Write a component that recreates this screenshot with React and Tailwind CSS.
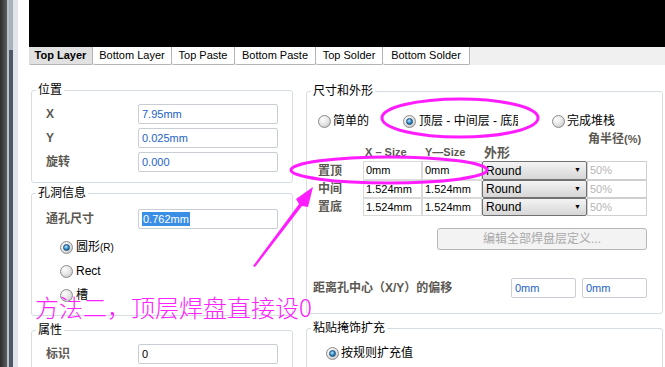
import React from 'react';

const tabs = [
  { label: 'Top Layer', w: 'w-[64px]', active: true },
  { label: 'Bottom Layer', w: 'w-[79px]' },
  { label: 'Top Paste', w: 'w-[63px]' },
  { label: 'Bottom Paste', w: 'w-[81px]' },
  { label: 'Top Solder', w: 'w-[67px]' },
  { label: 'Bottom Solder', w: 'w-[87px]' },
];

const layers = [
  { name: '置顶', x: '0mm', y: '0mm', h: 'h-[19px]' },
  { name: '中间', x: '1.524mm', y: '1.524mm', h: 'h-[18px]' },
  { name: '置底', x: '1.524mm', y: '1.524mm', h: 'h-[18px]' },
];

function Radio({ on }) {
  return (
    <span className="inline-flex w-[13px] h-[13px] shrink-0 items-center justify-center rounded-full border border-[#8b8b8b] bg-[radial-gradient(circle_at_35%_30%,#ffffff,#e2e2e2_55%,#b5b5b5)]">
      {on && (
        <span className="w-[7px] h-[7px] rounded-full border border-[#1a4c74] bg-[radial-gradient(circle_at_40%_35%,#b0e8ff,#3188c8_55%,#0f416e)]" />
      )}
    </span>
  );
}

function Field({ children, className = '' }) {
  return (
    <div className={`h-[20px] border border-[#c9ced4] rounded-[2px] bg-white flex items-center pl-[3px] text-[11px] ${className}`}>
      {children}
    </div>
  );
}

function Group({ title, className = '', children }) {
  return (
    <fieldset className={`border border-[#d6dde3] rounded-[3px] ${className}`}>
      <legend className="ml-[4px] px-[2px] text-[12px] leading-[13px] text-black">{title}</legend>
      {children}
    </fieldset>
  );
}

const label = 'text-[#5c5852] font-bold';

export default function App() {
  return (
    <div className="relative w-[665px] h-[367px] overflow-hidden bg-white flex text-black font-['Liberation_Sans','Noto_Sans_CJK_SC',sans-serif]">
      {/* left window edge */}
      <div className="flex w-[29px] shrink-0 h-full">
        <div className="w-[7px] bg-gradient-to-r from-[#2c2c2c] to-[#5e5e5e]" />
        <div className="w-[2px] bg-[#b9bfc6]" />
        <div className="w-[4px] flex flex-col">
          <div className="h-[50px] bg-[#a8b0ba]" />
          <div className="flex-1 bg-[#4e5866]" />
        </div>
        <div className="w-[5px] bg-[#e1e5e9]" />
        <div className="flex-1 bg-white" />
      </div>

      <div className="flex-1 flex flex-col min-w-0">
        <div className="h-[47px] bg-black shrink-0" />

        {/* tabs */}
        <div className="h-[18px] bg-[#f0f0f0] flex shrink-0">
          {tabs.map((t) => (
            <div
              key={t.label}
              className={`${t.w} h-full flex items-center justify-center text-[11px] border-r border-b border-[#b3b3b3] rounded-b-[2px] ${
                t.active ? 'bg-[#e1e1e1] font-bold' : 'bg-white'
              }`}
            >
              {t.label}
            </div>
          ))}
        </div>

        <div className="flex-1 flex">
          {/* left column */}
          <div className="w-[264px] shrink-0 pl-[2px] flex flex-col">
            <Group title="位置" className="mt-[19px] pb-[10px]">
              <div className="flex flex-col gap-[4px] mt-[7px] pl-[14px]">
                {[
                  ['X', '7.95mm'],
                  ['Y', '0.025mm'],
                  ['旋转', '0.000'],
                ].map(([k, v]) => (
                  <div key={k} className="flex items-center">
                    <span className={`w-[92px] text-[12px] ${label}`}>{k}</span>
                    <Field className="w-[140px] text-[#1d63c6]">{v}</Field>
                  </div>
                ))}
              </div>
            </Group>

            <Group title="孔洞信息" className="mt-[4px] pb-[8px]">
              <div className="flex items-center mt-[9px] pl-[14px]">
                <span className={`w-[92px] text-[12px] ${label}`}>通孔尺寸</span>
                <Field className="w-[140px] border-[#6e9ac4] pl-[2px]">
                  <span className="bg-[#3a8ee6] text-white px-[1px] leading-[14px]">0.762mm</span>
                </Field>
              </div>
              <div className="flex flex-col mt-[6px] pl-[28px]">
                {[
                  ['圆形', true],
                  ['Rect', false],
                  ['槽', false],
                ].map(([k, on]) => (
                  <div key={k} className="h-[24px] flex items-center gap-[3px]">
                    <Radio on={on} />
                    <span className="text-[12px]">
                      {k}
                      {on && <span className="text-[10px]">(R)</span>}
                    </span>
                  </div>
                ))}
              </div>
            </Group>

            <Group title="属性" className="mt-[8px] pb-[10px]">
              <div className="flex items-center mt-[7px] pl-[14px]">
                <span className={`w-[92px] text-[12px] ${label}`}>标识</span>
                <Field className="w-[140px]">0</Field>
              </div>
            </Group>
          </div>

          {/* right column */}
          <div className="w-[357px] shrink-0 ml-[13px] flex flex-col">
            <Group title="尺寸和外形" className="mt-[20px] pb-[15px]">
              <div className="h-[18px] mt-[14px] pl-[11px] flex items-center text-[12px]">
                <div className="w-[85px] shrink-0 flex items-center gap-[2px]">
                  <Radio />
                  <span>简单的</span>
                </div>
                <div className="w-[149px] shrink-0 flex items-center gap-[3px]">
                  <Radio on />
                  <div className="block w-[99px] max-w-[99px] overflow-hidden whitespace-nowrap">顶层 - 中间层 - 底层</div>
                </div>
                <div className="flex items-center gap-[2px]">
                  <Radio />
                  <span>完成堆栈</span>
                </div>
              </div>

              <div className={`h-[14px] mt-[2px] pl-[281px] flex items-center text-[12px] ${label}`}>
                角半径<span className="text-[11px]">(%)</span>
              </div>

              <div className={`h-[15px] flex items-end pb-[1px] text-[11px] ${label}`}>
                <span className="ml-[58px] w-[60px]">X – Size</span>
                <span className="w-[59px]">Y—Size</span>
                <span className="text-[13px] leading-[14px]">外形</span>
              </div>

              <div className="flex flex-col">
                {layers.map((r) => (
                  <div key={r.name} className={`${r.h} flex items-stretch`}>
                    <span className={`w-[56px] pl-[11px] flex items-center text-[12px] ${label}`}>{r.name}</span>
                    <div className="w-[59px] border border-[#dadada] bg-white flex items-center pl-[2px] text-[11px]">{r.x}</div>
                    <div className="w-[60px] border border-[#dadada] bg-white flex items-center pl-[2px] text-[11px]">{r.y}</div>
                    <div className="w-[105px] border border-[#717171] rounded-[2px] bg-gradient-to-b from-[#f4f4f4] to-[#d6d6d6] flex items-center justify-between pl-[3px] pr-[5px] text-[12px]">
                      <span>Round</span>
                      <span className="text-[7px]">▼</span>
                    </div>
                    <div className="w-[60px] border border-[#cfcfcf] bg-white flex items-center pl-[2px] text-[11px] text-[#b5b5b5]">50%</div>
                  </div>
                ))}
              </div>

              <div className="mt-[12px] ml-[130px] w-[210px] h-[22px] border border-[#b7b7b7] rounded-[3px] bg-[#f3f3f3] flex items-center justify-center text-[12px] text-[#a9a9a9]">
                编辑全部焊盘层定义...
              </div>

              <div className="mt-[28px] pl-[6px] flex items-center">
                <span className={`w-[198px] text-[12px] ${label}`}>距离孔中心（X/Y）的偏移</span>
                <Field className="w-[65px] text-[#1d63c6]">0mm</Field>
                <Field className="w-[65px] ml-[6px] text-[#1d63c6]">0mm</Field>
              </div>
            </Group>

            <Group title="粘贴掩饰扩充" className="mt-[8px] pb-[20px]">
              <div className="mt-[9px] pl-[19px] flex items-center gap-[2px] text-[12px]">
                <Radio on />
                <span>按规则扩充值</span>
              </div>
            </Group>
          </div>
        </div>
      </div>

      {/* annotations */}
      <svg className="absolute inset-0 pointer-events-none" width="665" height="367" viewBox="0 0 665 367">
        <ellipse cx="460" cy="118" rx="78" ry="19" fill="none" stroke="#ff1dff" strokeWidth="3" />
        <ellipse cx="389" cy="170" rx="98" ry="13" fill="none" stroke="#ff1dff" strokeWidth="3" />
        <polygon points="253,266 299,204 296,199 313,187 308,207 302,206 255,267" fill="#ff1dff" />
      </svg>
      <div className="absolute left-[35px] top-[295px] text-[24px] leading-[24px] font-light text-[#ff20ff] whitespace-nowrap font-['Noto_Sans_CJK_SC',sans-serif]">
        方法二，顶层焊盘直接设0
      </div>
    </div>
  );
}
